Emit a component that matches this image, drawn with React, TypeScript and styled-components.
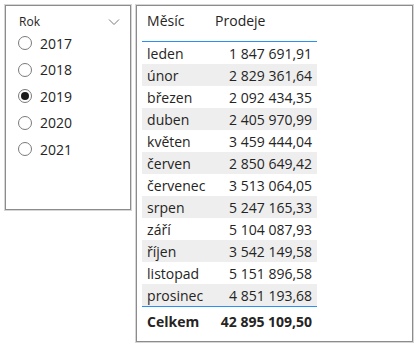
import React from 'react';
import styled, { createGlobalStyle } from 'styled-components';

const GlobalStyle = createGlobalStyle`
  html, body {
    margin: 0;
    padding: 0;
    background: #ffffff;
  }
  body {
    font-family: "Open Sans", "Noto Sans", sans-serif;
    color: #252423;
  }
`;

const years = ['2017', '2018', '2019', '2020', '2021'];

const sales: [string, string][] = [
  ['leden', '1 847 691,91'],
  ['únor', '2 829 361,64'],
  ['březen', '2 092 434,35'],
  ['duben', '2 405 970,99'],
  ['květen', '3 459 444,04'],
  ['červen', '2 850 649,42'],
  ['červenec', '3 513 064,05'],
  ['srpen', '5 247 165,33'],
  ['září', '5 104 087,93'],
  ['říjen', '3 542 149,58'],
  ['listopad', '5 151 896,58'],
  ['prosinec', '4 851 193,68'],
];

const Page = styled.div`
  display: flex;
  align-items: flex-start;
  gap: 5px;
  padding: 5px;
`;

const Panel = styled.div<{ $w: number; $h: number }>`
  box-sizing: border-box;
  width: ${p => p.$w}px;
  height: ${p => p.$h}px;
  border: 1px solid #8c8c8c;
  box-shadow: 0 0 0 1px #d6d6d6;
  background: #ffffff;
`;

const SlicerHeader = styled.div`
  display: flex;
  align-items: center;
  justify-content: space-between;
  padding: 7px 10px 0 13px;
  font-size: 12px;
  height: 17px;
`;

const Chevron = styled.svg`
  width: 12px;
  height: 8px;
`;

const OptionList = styled.div`
  display: flex;
  flex-direction: column;
  padding: 0 0 0 12px;
`;

const Option = styled.label`
  display: flex;
  align-items: center;
  gap: 8px;
  height: 26.5px;
  font-size: 14px;
`;

const Radio = styled.span<{ $checked?: boolean }>`
  box-sizing: border-box;
  width: 14px;
  height: 14px;
  border-radius: 50%;
  border: 1px solid #7a7a7a;
  display: flex;
  align-items: center;
  justify-content: center;

  &::after {
    content: '';
    display: ${p => (p.$checked ? 'block' : 'none')};
    width: 8px;
    height: 8px;
    border-radius: 50%;
    background: #1b1b1b;
  }
`;

const Table = styled.div`
  width: 175px;
  margin: 0 0 0 5px;
  font-size: 14px;
`;

const Row = styled.div<{ $shade?: boolean }>`
  display: grid;
  grid-template-columns: 68px 1fr;
  height: 22px;
  align-items: center;
  background: ${p => (p.$shade ? '#eeeeee' : 'transparent')};
`;

const HeadRow = styled(Row)`
  height: 36px;
  align-items: start;
  padding-top: 5px;
  box-sizing: border-box;
  border-bottom: 1px solid #2b91f0;
`;

const TotalRow = styled(Row)`
  height: 29px;
  font-weight: 700;
  border-top: 1px solid #2b91f0;
`;

const Cell = styled.span<{ $num?: boolean }>`
  padding: 0 5px;
  text-align: ${p => (p.$num ? 'right' : 'left')};
  white-space: nowrap;
`;

export default function App() {
  return (
    <>
      <GlobalStyle />
      <Page>
        <Panel $w={127} $h={205}>
          <SlicerHeader>
            <span>Rok</span>
            <Chevron viewBox="0 0 12 8">
              <path d="M1 1.5 L6 6.5 L11 1.5" fill="none" stroke="#7a7a7a" strokeWidth="1" />
            </Chevron>
          </SlicerHeader>
          <OptionList>
            {years.map(y => (
              <Option key={y}>
                <Radio $checked={y === '2019'} />
                {y}
              </Option>
            ))}
          </OptionList>
        </Panel>
        <Panel $w={279} $h={337}>
          <Table>
            <HeadRow>
              <Cell>Měsíc</Cell>
              <Cell>Prodeje</Cell>
            </HeadRow>
            {sales.map(([m, v], i) => (
              <Row key={m} $shade={i % 2 === 1}>
                <Cell>{m}</Cell>
                <Cell $num>{v}</Cell>
              </Row>
            ))}
            <TotalRow>
              <Cell>Celkem</Cell>
              <Cell $num>42 895 109,50</Cell>
            </TotalRow>
          </Table>
        </Panel>
      </Page>
    </>
  );
}
